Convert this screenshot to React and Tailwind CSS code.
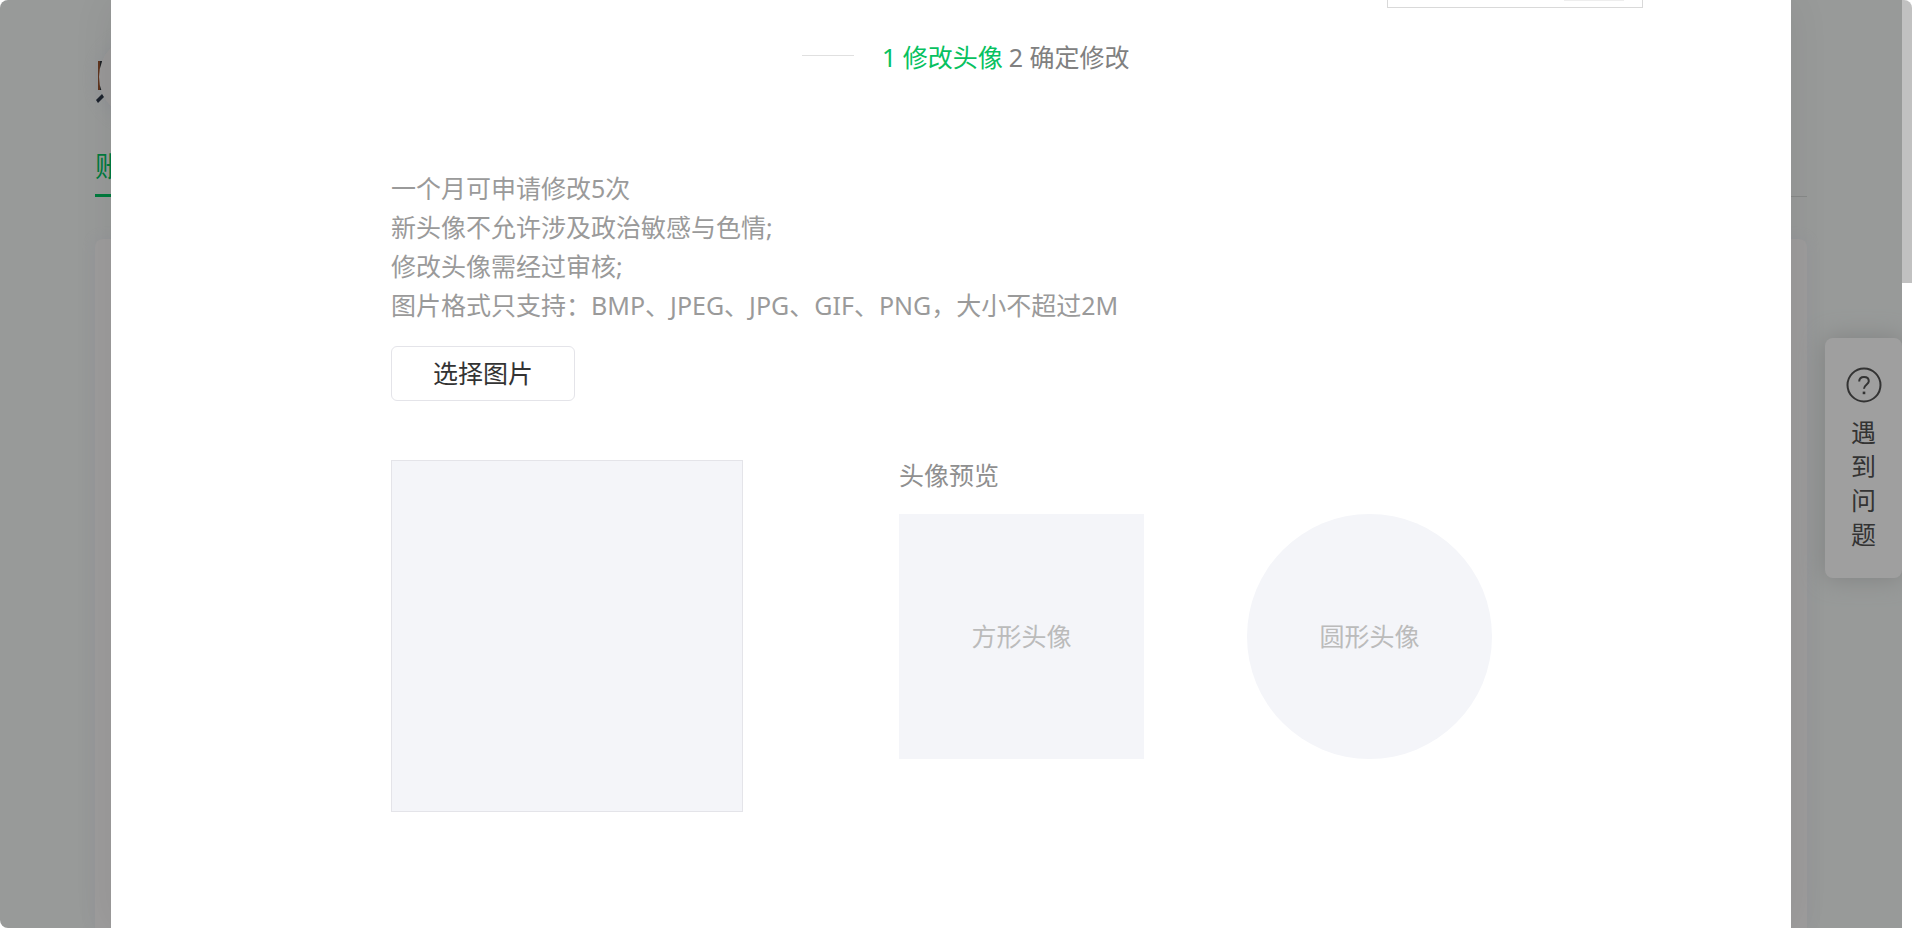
import { useState } from "react";

const tips = [
  "一个月可申请修改5次",
  "新头像不允许涉及政治敏感与色情;",
  "修改头像需经过审核;",
  "图片格式只支持：BMP、JPEG、JPG、GIF、PNG，大小不超过2M",
];

const steps = ["1 修改头像", "2 确定修改"];

// Account page that stays dimmed behind the dialog
const AccountPage = () => {
  return (
    <div className="flex h-full flex-col px-[95px]">

      <div className="relative mt-[35px] h-[84px]">
        <div className="absolute left-1 size-[84px] rounded-full shadow-[0_2px_16px_#8f9196]" />
        <svg className="absolute top-[26px] left-px h-[42px] w-2" viewBox="0 0 8 42" aria-hidden="true">
          <path d="M2 0H6V29H2Z" fill="#1d2024" />
          <path d="M2 0H4V29H2Z" fill="#5e351e" />
          <path d="M0 39L6 33L8 36L2 42Z" fill="#1c222c" />
        </svg>
        <div className="absolute left-1 size-[84px] rounded-full bg-[#999898]" />
      </div>

      <nav className="mt-[27px] flex border-b border-[#878988]">
        <a href="#account" className="-mb-px border-b-3 border-[#007a3d] pb-2 text-[28px] leading-[40px] text-[#007a3d]">
          账
        </a>
      </nav>

      <div className="mt-[42px] flex-1 rounded-t-lg bg-[#9d9c9c] shadow-[0_0_12px_#94959a]" />
    </div>
  );
};

const HelpButton = () => {
  return (
    <button
      type="button"
      className="absolute top-[338px] right-0 flex w-[77px] flex-col items-center rounded-lg bg-[#9f9f9f] pt-[29px] pb-[27px] text-[#333333] shadow-[0_0_24px_#7f8181]"
    >
      <svg className="size-9" viewBox="0 0 36 36" fill="none" stroke="currentColor" strokeWidth="2" aria-hidden="true">
        <circle cx="18" cy="18" r="16.5" />
        <path d="M13.2 14.6C13.2 11.6 15.2 10 18 10C20.8 10 22.8 11.7 22.8 14.2C22.8 17.4 18 17.6 18 21.8" />
        <path d="M18 24.6V27.2" strokeWidth="2.6" />
      </svg>
      <span className="mt-3 w-[25px] text-[25px] leading-[34px]">遇到问题</span>
    </button>
  );
};

const AvatarDialog = () => {
  const [step] = useState(0);

  return (
    <div
      role="dialog"
      aria-label="修改头像"
      className="absolute inset-x-[111px] inset-y-0 overflow-hidden bg-white text-[25px] shadow-[0_0_40px_rgba(0,0,0,0.07)]"
    >
      {/* bottom edge of the box that is scrolled out at the top */}
      <div className="mr-[148px] ml-auto h-2 w-[256px] border border-t-0 border-[#d9d9d9]">
        <div className="mr-[18px] ml-auto h-px w-[60px] bg-[#eeeeee]" />
      </div>

      <ol className="mx-auto mt-[29px] flex w-[298px] items-center whitespace-nowrap">
        <li aria-hidden="true" className="mr-7 mb-[3px] h-px w-[52px] shrink-0 bg-[#e0e0e0]" />
        {steps.map((name, i) => (
          <li key={name} className={i === step ? "mr-[6px] leading-[40px] text-[#07c160]" : "leading-[40px] text-[#808080]"}>
            {name}
          </li>
        ))}
      </ol>

      <div className="px-[280px] pt-[92px]">
        {tips.map((tip) => (
          <p key={tip} className="leading-[39px] text-[#9a9a9a]">{tip}</p>
        ))}

        <button type="button" className="mt-[21px] h-[55px] w-[184px] rounded-md border border-[#e4e4e9] text-[#333333]">
          选择图片
        </button>

        <div className="mt-[59px] flex gap-[156px]">
          <div className="size-[352px] shrink-0 border border-[#e4e4e9] bg-[#f4f5f9]" />

          <div>
            <h3 className="leading-[30px] text-[#8f8f8f]">头像预览</h3>
            <div className="mt-6 flex gap-[103px] text-[#bbbbbb]">
              <div className="flex size-[245px] shrink-0 items-center justify-center bg-[#f4f5f9]">方形头像</div>
              <div className="flex size-[245px] shrink-0 items-center justify-center rounded-full bg-[#f4f5f9]">圆形头像</div>
            </div>
          </div>
        </div>
      </div>
    </div>
  );
};

const App = () => {
  return (
    <div className="flex h-screen overflow-hidden rounded-lg bg-white font-['Noto_Sans','Noto_Sans_CJK_SC',sans-serif]">
      <main className="relative flex-1 overflow-hidden bg-[#989a99]">
        <AccountPage />
        <HelpButton />
        <AvatarDialog />
      </main>

      {/* Scrollbar */}
      <div className="w-[10px] bg-white">
        <div className="h-[30.5%] bg-[#c1c1c1]" />
      </div>
    </div>
  );
};

export default App;
